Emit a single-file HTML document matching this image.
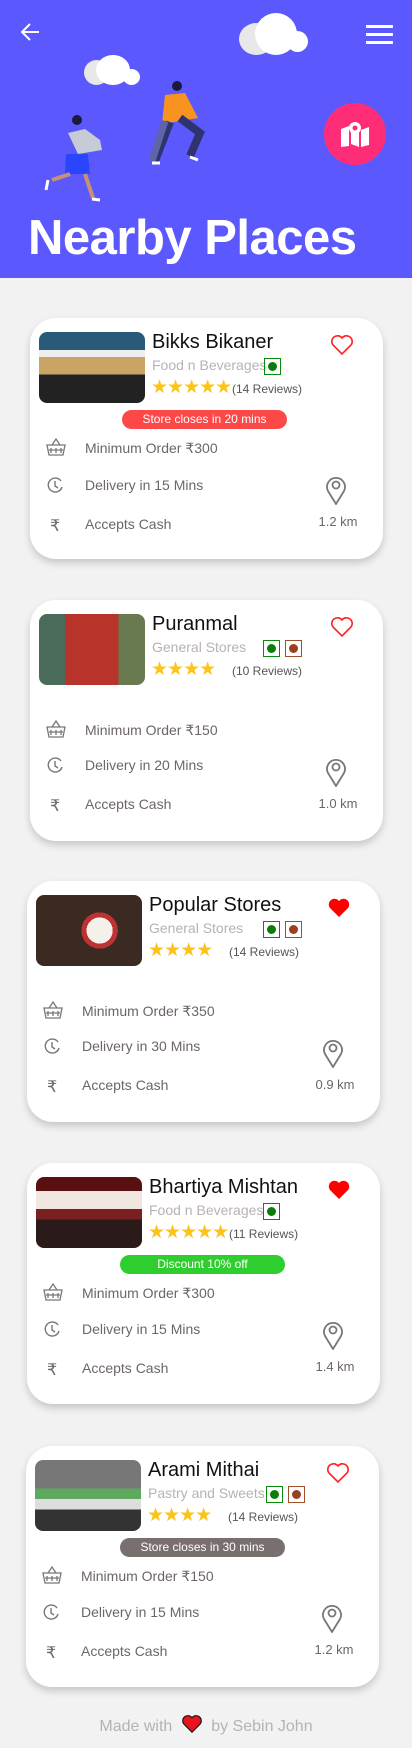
<!DOCTYPE html>
<html><head><meta charset="utf-8"><style>
*{margin:0;padding:0;box-sizing:border-box}
body{width:412px;height:1748px;background:#f2f2f2;font-family:"Liberation Sans",sans-serif;position:relative;overflow:hidden}
.hdr{position:absolute;left:0;top:0;width:412px;height:278px;background:#5b59fd}
.title{position:absolute;left:28px;top:210px;color:#fff;font-size:49px;font-weight:bold;letter-spacing:-0.5px}
.cl{position:absolute;border-radius:50%}
.card{position:absolute;width:353px;height:241px;background:#fff;border-radius:26px;box-shadow:0 4px 8px rgba(0,0,0,.18)}
.img{position:absolute;left:9px;top:14px;width:106px;height:71px;border-radius:8px;overflow:hidden}
.name{position:absolute;left:122px;top:13px;font-size:20px;color:#111}
.cat{position:absolute;left:122px;top:39px;font-size:14px;color:#b9b1b3}
.stars{position:absolute;left:121px;top:58px;font-size:19px;color:#fcc419;letter-spacing:-1px}
.rev{position:absolute;left:202px;top:64px;font-size:12px;color:#555}
.vg{position:absolute;top:40px;width:17px;height:17px;border:1.5px solid #0a8a0a}
.vg i{position:absolute;left:3px;top:3px;width:9px;height:9px;border-radius:50%;background:#0a7d0a}
.nv{border-color:#a0502a}.nv i{background:#9a4020}
.heart{position:absolute;left:300px;top:16px}
.badge{position:absolute;top:92px;height:19px;width:165px;border-radius:10px;color:#fff;font-size:12px;text-align:center;line-height:19px}
.row{position:absolute;left:55px;font-size:14px;color:#6d6566}
.ic{position:absolute;left:16px}
.pin{position:absolute;left:295px;top:157px}
.km{position:absolute;left:288px;top:196px;font-size:13px;color:#6d6566;width:40px;text-align:center}
</style></head><body>
<div class="hdr">
<svg style="position:absolute;left:20px;top:22px" width="20" height="20" viewBox="0 0 20 20"><path d="M19 10H2M10 2L2 10l8 8" stroke="#fff" stroke-width="2" fill="none"/></svg>
<div style="position:absolute;left:366px;top:25px;width:27px;height:3px;background:#fff;box-shadow:0 8px 0 #fff,0 16px 0 #fff"></div>
<div class="cl" style="left:239px;top:23px;width:35px;height:32px;background:#e8e8e8"></div>
<div class="cl" style="left:255px;top:13px;width:42px;height:42px;background:#fff"></div>
<div class="cl" style="left:287px;top:31px;width:21px;height:21px;background:#fff"></div>
<div class="cl" style="left:84px;top:60px;width:25px;height:25px;background:#e8e8e8"></div>
<div class="cl" style="left:96px;top:55px;width:34px;height:30px;background:#fff"></div>
<div class="cl" style="left:123px;top:69px;width:17px;height:16px;background:#fff"></div>
<svg style="position:absolute;left:40px;top:78px" width="170" height="130" viewBox="0 0 170 130">
<circle cx="37" cy="42" r="5" fill="#1a1a3a"/><path d="M28 55 L45 51 L60 62 L62 72 L38 76 Z" fill="#c5ccd6"/><path d="M26 76 L48 76 L50 96 L25 96 Z" fill="#2b45ff"/><path d="M30 96 L12 102 M45 96 L53 120" stroke="#c99074" stroke-width="4"/><path d="M8 102 L6 112 M52 121 L60 122" stroke="#fff" stroke-width="3"/>
<circle cx="137" cy="8" r="5" fill="#1a1a3a"/><path d="M125 17 L145 15 L158 40 L122 46 Z" fill="#f7931e"/><path d="M140 40 L160 55 L150 78 M130 44 L115 83" stroke="#2f3470" stroke-width="8" fill="none"/><path d="M125 43 L112 83" stroke="#5f64a8" stroke-width="7"/><path d="M112 85 L120 85 M150 79 L158 82" stroke="#fff" stroke-width="3"/>
</svg>
<div class="cl" style="left:324px;top:103px;width:62px;height:62px;background:#ff2d78"></div>
<svg style="position:absolute;left:340px;top:121px" width="30" height="26" viewBox="0 0 30 26"><path d="M1 8 L9 5 L9 25 L1 26Z M11 6 L19 9 L19 26 L11 23Z M21 9 L29 6 L29 24 L21 26Z" fill="#fff"/><circle cx="15" cy="7" r="6" fill="#fff"/><circle cx="15" cy="7" r="2.5" fill="#ff2d78"/></svg>
<div class="title">Nearby Places</div>
</div>

<div class="card" style="left:30px;top:318px">
<div class="img" style="background:linear-gradient(#2a5a7a 0 25%,#eee 25% 35%,#c9a465 35% 60%,#222 60%)"></div>
<div class="name">Bikks Bikaner</div><div class="cat">Food n Beverages</div>
<div class="vg" style="left:234px"><i></i></div>
<div class="stars">★★★★★</div><div class="rev">(14 Reviews)</div>
<svg class="heart" width="24" height="22" viewBox="0 0 24 22"><path d="M12 20 L3 11 A5 5 0 0 1 12 4 A5 5 0 0 1 21 11Z" fill="none" stroke="#f22" stroke-width="1.6"/></svg>
<div class="badge" style="left:92px;background:#fd4848">Store closes in 20 mins</div>
<svg class="ic" style="top:120px" width="20" height="18" viewBox="0 0 20 18"><path d="M1 7h18l-2 10H3Z M6 7l4-6 4 6 M5 10v5M10 10v5M15 10v5M3 12h14" fill="none" stroke="#777" stroke-width="1.3"/></svg>
<div class="row" style="top:122px">Minimum Order ₹300</div>
<svg class="ic" style="top:158px" width="18" height="18" viewBox="0 0 18 18"><path d="M15 5A7 7 0 1 0 16 11M9 5v5l3 2" fill="none" stroke="#777" stroke-width="1.4"/></svg>
<div class="row" style="top:159px">Delivery in 15 Mins</div>
<div class="row" style="top:198px;left:20px;font-size:16px">₹</div><div class="row" style="top:198px">Accepts Cash</div>
<svg class="pin" width="22" height="30" viewBox="0 0 22 30"><path d="M11 29 L3 16 A9 9 0 1 1 19 16Z" fill="none" stroke="#777" stroke-width="1.8"/><circle cx="11" cy="10" r="3.5" fill="none" stroke="#777" stroke-width="1.8"/></svg>
<div class="km">1.2 km</div>
</div>

<div class="card" style="left:30px;top:600px">
<div class="img" style="background:linear-gradient(90deg,#4a6a5a 0 25%,#b8332a 25% 75%,#6a7a50 75%)"></div>
<div class="name">Puranmal</div><div class="cat">General Stores</div>
<div class="vg" style="left:233px"><i></i></div><div class="vg nv" style="left:255px"><i></i></div>
<div class="stars">★★★★</div><div class="rev">(10 Reviews)</div>
<svg class="heart" width="24" height="22" viewBox="0 0 24 22"><path d="M12 20 L3 11 A5 5 0 0 1 12 4 A5 5 0 0 1 21 11Z" fill="none" stroke="#f22" stroke-width="1.6"/></svg>
<svg class="ic" style="top:120px" width="20" height="18" viewBox="0 0 20 18"><path d="M1 7h18l-2 10H3Z M6 7l4-6 4 6 M5 10v5M10 10v5M15 10v5M3 12h14" fill="none" stroke="#777" stroke-width="1.3"/></svg>
<div class="row" style="top:122px">Minimum Order ₹150</div>
<svg class="ic" style="top:156px" width="18" height="18" viewBox="0 0 18 18"><path d="M15 5A7 7 0 1 0 16 11M9 5v5l3 2" fill="none" stroke="#777" stroke-width="1.4"/></svg>
<div class="row" style="top:157px">Delivery in 20 Mins</div>
<div class="row" style="top:196px;left:20px;font-size:16px">₹</div><div class="row" style="top:196px">Accepts Cash</div>
<svg class="pin" width="22" height="30" viewBox="0 0 22 30"><path d="M11 29 L3 16 A9 9 0 1 1 19 16Z" fill="none" stroke="#777" stroke-width="1.8"/><circle cx="11" cy="10" r="3.5" fill="none" stroke="#777" stroke-width="1.8"/></svg>
<div class="km">1.0 km</div>
</div>

<div class="card" style="left:27px;top:881px">
<div class="img" style="background:radial-gradient(circle at 60% 50%,#f4f0ea 0 18%,#b33 18% 25%,#3a2a22 25%)"></div>
<div class="name">Popular Stores</div><div class="cat">General Stores</div>
<div class="vg" style="left:236px"><i></i></div><div class="vg nv" style="left:258px"><i></i></div>
<div class="stars">★★★★</div><div class="rev">(14 Reviews)</div>
<svg class="heart" width="24" height="22" viewBox="0 0 24 22"><path d="M12 20 L3 11 A5 5 0 0 1 12 4 A5 5 0 0 1 21 11Z" fill="#f00"/></svg>
<svg class="ic" style="top:120px" width="20" height="18" viewBox="0 0 20 18"><path d="M1 7h18l-2 10H3Z M6 7l4-6 4 6 M5 10v5M10 10v5M15 10v5M3 12h14" fill="none" stroke="#777" stroke-width="1.3"/></svg>
<div class="row" style="top:122px">Minimum Order ₹350</div>
<svg class="ic" style="top:156px" width="18" height="18" viewBox="0 0 18 18"><path d="M15 5A7 7 0 1 0 16 11M9 5v5l3 2" fill="none" stroke="#777" stroke-width="1.4"/></svg>
<div class="row" style="top:157px">Delivery in 30 Mins</div>
<div class="row" style="top:196px;left:20px;font-size:16px">₹</div><div class="row" style="top:196px">Accepts Cash</div>
<svg class="pin" width="22" height="30" viewBox="0 0 22 30"><path d="M11 29 L3 16 A9 9 0 1 1 19 16Z" fill="none" stroke="#777" stroke-width="1.8"/><circle cx="11" cy="10" r="3.5" fill="none" stroke="#777" stroke-width="1.8"/></svg>
<div class="km">0.9 km</div>
</div>

<div class="card" style="left:27px;top:1163px">
<div class="img" style="background:linear-gradient(#5a1010 0 20%,#f0e8e0 20% 45%,#7a2020 45% 60%,#2a1a1a 60%)"></div>
<div class="name">Bhartiya Mishtan</div><div class="cat">Food n Beverages</div>
<div class="vg" style="left:236px"><i></i></div>
<div class="stars">★★★★★</div><div class="rev">(11 Reviews)</div>
<svg class="heart" width="24" height="22" viewBox="0 0 24 22"><path d="M12 20 L3 11 A5 5 0 0 1 12 4 A5 5 0 0 1 21 11Z" fill="#f00"/></svg>
<div class="badge" style="left:93px;background:#2fce2f">Discount 10% off</div>
<svg class="ic" style="top:120px" width="20" height="18" viewBox="0 0 20 18"><path d="M1 7h18l-2 10H3Z M6 7l4-6 4 6 M5 10v5M10 10v5M15 10v5M3 12h14" fill="none" stroke="#777" stroke-width="1.3"/></svg>
<div class="row" style="top:122px">Minimum Order ₹300</div>
<svg class="ic" style="top:157px" width="18" height="18" viewBox="0 0 18 18"><path d="M15 5A7 7 0 1 0 16 11M9 5v5l3 2" fill="none" stroke="#777" stroke-width="1.4"/></svg>
<div class="row" style="top:158px">Delivery in 15 Mins</div>
<div class="row" style="top:197px;left:20px;font-size:16px">₹</div><div class="row" style="top:197px">Accepts Cash</div>
<svg class="pin" width="22" height="30" viewBox="0 0 22 30"><path d="M11 29 L3 16 A9 9 0 1 1 19 16Z" fill="none" stroke="#777" stroke-width="1.8"/><circle cx="11" cy="10" r="3.5" fill="none" stroke="#777" stroke-width="1.8"/></svg>
<div class="km">1.4 km</div>
</div>

<div class="card" style="left:26px;top:1446px">
<div class="img" style="background:linear-gradient(#777 0 40%,#5fa85f 40% 55%,#ddd 55% 70%,#333 70%)"></div>
<div class="name">Arami Mithai</div><div class="cat">Pastry and Sweets</div>
<div class="vg" style="left:240px"><i></i></div><div class="vg nv" style="left:262px"><i></i></div>
<div class="stars">★★★★</div><div class="rev">(14 Reviews)</div>
<svg class="heart" width="24" height="22" viewBox="0 0 24 22"><path d="M12 20 L3 11 A5 5 0 0 1 12 4 A5 5 0 0 1 21 11Z" fill="none" stroke="#f22" stroke-width="1.6"/></svg>
<div class="badge" style="left:94px;background:#7a6f6f">Store closes in 30 mins</div>
<svg class="ic" style="top:120px" width="20" height="18" viewBox="0 0 20 18"><path d="M1 7h18l-2 10H3Z M6 7l4-6 4 6 M5 10v5M10 10v5M15 10v5M3 12h14" fill="none" stroke="#777" stroke-width="1.3"/></svg>
<div class="row" style="top:122px">Minimum Order ₹150</div>
<svg class="ic" style="top:157px" width="18" height="18" viewBox="0 0 18 18"><path d="M15 5A7 7 0 1 0 16 11M9 5v5l3 2" fill="none" stroke="#777" stroke-width="1.4"/></svg>
<div class="row" style="top:158px">Delivery in 15 Mins</div>
<div class="row" style="top:197px;left:20px;font-size:16px">₹</div><div class="row" style="top:197px">Accepts Cash</div>
<svg class="pin" width="22" height="30" viewBox="0 0 22 30"><path d="M11 29 L3 16 A9 9 0 1 1 19 16Z" fill="none" stroke="#777" stroke-width="1.8"/><circle cx="11" cy="10" r="3.5" fill="none" stroke="#777" stroke-width="1.8"/></svg>
<div class="km">1.2 km</div>
</div>

<div style="position:absolute;left:0;top:1714px;width:412px;text-align:center;font-size:16px;color:#b9b1b3">Made with <svg width="22" height="20" viewBox="0 0 24 22" style="vertical-align:-3px;margin:0 4px"><path d="M12 20 L3 11 A5 5 0 0 1 12 4 A5 5 0 0 1 21 11Z" fill="#e8141e" stroke="#111" stroke-width="1.2"/></svg> by Sebin John</div>
</body></html>
